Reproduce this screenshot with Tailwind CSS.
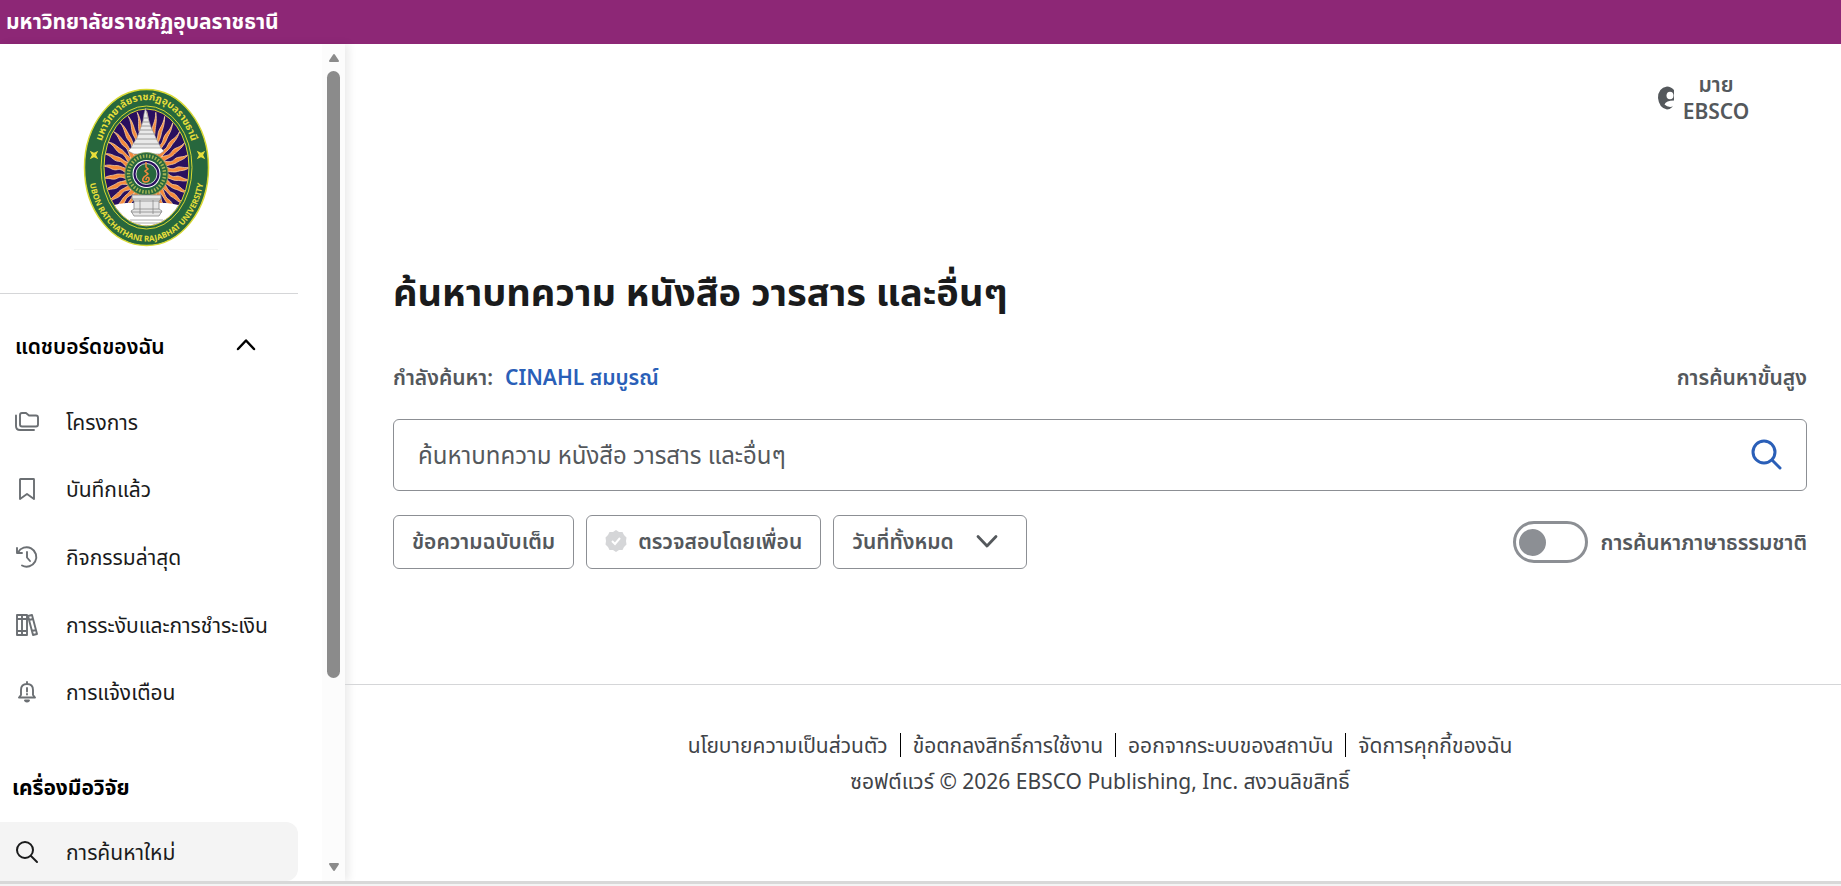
<!DOCTYPE html>
<html lang="th">
<head>
  <meta charset="UTF-8" />
  <meta name="viewport" content="width=device-width, initial-scale=1.0"/>
  <title>EBSCO</title>
  <script src="https://cdn.jsdelivr.net/npm/@tailwindcss/browser@4"></script>
</head>
<body class="min-h-screen flex flex-col bg-white text-[#1a1b1c] text-[21px] leading-7 font-['Noto_Sans','Noto_Sans_Thai',sans-serif]">
  <header class="h-11 shrink-0 flex items-center px-1.5 pb-0.5 bg-[#8d2776] text-white font-bold">มหาวิทยาลัยราชภัฏอุบลราชธานี</header>

  <div class="flex flex-1">
    <!-- Sidebar -->
    <aside class="w-[345px] shrink-0 flex shadow-[4px_0_8px_rgba(0,0,0,0.08)]">
      <div class="flex-1 pr-6">
        <div class="pt-9 pl-[70px] h-[250px] border-b border-[#d5d6d8]">
          <svg class="w-[150px] h-[180px]" viewBox="0 0 150 180" role="img" aria-label="Ubon Ratchathani Rajabhat University">
            <defs>
              <clipPath id="oval"><ellipse cx="76.5" cy="87.5" rx="42" ry="58"/></clipPath>
              <path id="flame" d="M-3 -20C-6 -29 2 -33 -1 -41C-3 -48 2 -52 0 -62C4 -53 2 -49 3 -43C4 -36 0 -32 3 -20Z"/>
              <g id="flames">
                <use href="#flame"/>
                <use href="#flame" transform="rotate(12)"/>
                <use href="#flame" transform="rotate(24)"/>
                <use href="#flame" transform="rotate(36)"/>
                <use href="#flame" transform="rotate(48)"/>
                <use href="#flame" transform="rotate(60)"/>
              </g>
              <path id="topArc" d="M30 69A48 65 0 0 1 123 69"/>
              <path id="bottomArc" d="M18.500 88A58 73.500 0 0 0 134.500 88"/>
            </defs>
            <path d="M4 169.500H148" stroke="#f5f5f5"/>
            <ellipse cx="76.500" cy="87.500" rx="62" ry="78" fill="#27673d" stroke="#d8d832" stroke-width="1.500"/>
            <ellipse cx="76.500" cy="87.500" rx="45.500" ry="61.500" fill="none" stroke="#d8d832" stroke-width="1"/>
            <ellipse cx="76.500" cy="87.500" rx="42.500" ry="58.500" fill="#29105f" stroke="#d8d832" stroke-width="1"/>
            <g clip-path="url(#oval)">
              <g transform="translate(76.500 93) scale(.72 1)" fill="#f58a3c" stroke="#fbd9a8" stroke-width=".8">
                <use href="#flames"/>
                <use href="#flames" transform="rotate(72)"/>
                <use href="#flames" transform="rotate(144)"/>
                <use href="#flames" transform="rotate(216)"/>
                <use href="#flames" transform="rotate(288)"/>
              </g>
              <path d="M30 150V132Q40 124 56 123H96Q112 124 124 132V150Z" fill="#fff"/>
              <path d="M60 140H93M57 143H96M59 146H94" stroke="#999" stroke-width=".8"/>
            </g>
            <path d="M75.500 28L77 34L79 41L81 47L86 58L90 66L92 71V70Q77 75 60 70L63 64L67 58L71 47L73 41L74 34Z" fill="#e9e9e9" stroke="#999" stroke-width=".6"/>
            <path d="M73.500 38H78M72.500 42H79M71 46H81M70 50H83M68 54H85M66 59H87M64 64H89" stroke="#888" stroke-width=".8"/>
            <path d="M61 68L58 71L64 74L90 74L94 71L91 68Z" fill="#fff" stroke="#888" stroke-width=".6"/>
            <circle cx="76.500" cy="94" r="21.500" fill="#27673d" stroke="#7a9b50" stroke-width=".8"/>
            <circle cx="76.500" cy="94" r="18" fill="none" stroke="#a4b553" stroke-width="3.500" stroke-dasharray="1.500 1.600"/>
            <circle cx="76.500" cy="94" r="14" fill="#fff"/>
            <circle cx="76.500" cy="94" r="13" fill="#29105f"/>
            <circle cx="76.500" cy="94" r="10.500" fill="#27673d" stroke="#fff" stroke-width=".8"/>
            <path d="M76 82V87L78 89L75 91L78 94L74 97Q71 101 75 102Q80 102 79 98Q76 96 76 100" fill="none" stroke="#f58a3c" stroke-width="1.500"/>
            <path d="M62 115H91V119L89 121V129L92 131L89 136H64L61 131L64 129V121L62 119Z" fill="#e6e6e6" stroke="#888" stroke-width=".8"/>
            <path d="M62 119H91M64 121H89M64 129H89M70 120V134M83 120V134M61 132H92" stroke="#888" stroke-width=".8"/>
            <path d="M22 73L24 74L26 73L25 75L26 77L24 76L22 77L23 75ZM129 73L131 74L133 73L132 75L133 77L131 76L129 77L130 75Z" fill="#27673d" stroke="#e8df3a" stroke-width="2"/>
            <text class="text-[10px] font-bold" fill="#e8df3a" text-anchor="middle"><textPath href="#topArc" startOffset="50%">มหาวิทยาลัยราชภัฏอุบลราชธานี</textPath></text>
            <text class="text-[8px] font-bold" fill="#e8df3a" text-anchor="middle"><textPath href="#bottomArc" startOffset="50%">UBON RATCHATHANI RAJABHAT UNIVERSITY</textPath></text>
          </svg>
        </div>

        <button class="w-full h-[84px] mt-2.5 pl-[15px] pr-[42px] flex items-center justify-between font-semibold text-black">
          แดชบอร์ดของฉัน
          <svg class="w-5 h-5" viewBox="0 0 20 20" fill="none" stroke="currentColor" stroke-width="2.500" stroke-linecap="round" stroke-linejoin="round"><path d="M2 13L10 4.500L18 13"/></svg>
        </button>

        <nav class="h-[338px] flex flex-col">
          <a href="#" class="flex-1 flex items-center gap-[27px] pl-[15px]">
            <svg class="w-6 h-6 text-[#6b6f73]" viewBox="0 0 24 24" fill="none" stroke="currentColor" stroke-width="1.900" stroke-linecap="round" stroke-linejoin="round"><path d="M5 14.500V5Q5 3 7 3H11L14 5.500H21Q23 5.500 23 7.500V14.500Q23 16.500 21 16.500H7Q5 16.500 5 14.500ZM1 5.500V16Q1 20 5 20H19"/></svg>
            โครงการ
          </a>
          <a href="#" class="flex-1 flex items-center gap-[27px] pl-[15px]">
            <svg class="w-6 h-6 text-[#6b6f73]" viewBox="0 0 24 24" fill="none" stroke="currentColor" stroke-width="1.900" stroke-linejoin="round"><path d="M5 2.500Q5 2 5.500 2H18.500Q19 2 19 2.500V22L12 17L5 22Z"/></svg>
            บันทึกแล้ว
          </a>
          <a href="#" class="flex-1 flex items-center gap-[27px] pl-[15px]">
            <svg class="w-6 h-6 text-[#6b6f73]" viewBox="0 0 24 24" fill="none" stroke="currentColor" stroke-width="1.900" stroke-linecap="round" stroke-linejoin="round"><path d="M3 7.500A9.700 9.700 0 1 1 7 20.500M2 3V8H7M12 7V12.500L15 16"/></svg>
            กิจกรรมล่าสุด
          </a>
          <a href="#" class="flex-1 flex items-center gap-[27px] pl-[15px]">
            <svg class="w-6 h-6 text-[#6b6f73]" viewBox="0 0 24 24" fill="none" stroke="currentColor" stroke-width="1.900" stroke-linejoin="round"><path d="M2 2H7V22H2ZM7 2H12V22H7ZM2 6H12M2 18H12M13 3L17 2L22 21L18 22ZM14 7L18 6M17 18L21 17"/></svg>
            การระงับและการชำระเงิน
          </a>
          <a href="#" class="flex-1 flex items-center gap-[27px] pl-[15px]">
            <svg class="w-6 h-6 text-[#6b6f73]" viewBox="0 0 24 24" fill="none" stroke="currentColor" stroke-width="1.900" stroke-linecap="round" stroke-linejoin="round"><path d="M4 17.500H20L18 15V10Q18 4 12 4Q6 4 6 10V15ZM12 2V4M12 8V11.500M12 14V14.500"/><path d="M10 20.500H14Q12 22.500 10 20.500Z" fill="currentColor"/></svg>
            การแจ้งเตือน
          </a>
        </nav>

        <h2 class="h-[70px] mt-[26px] pl-3 flex items-center font-bold text-black">เครื่องมือวิจัย</h2>
        <a href="#" class="h-[59px] flex items-center gap-[27px] pl-[15px] rounded-r-xl bg-[#f4f4f4]">
          <svg class="w-6 h-6" viewBox="0 0 24 24" fill="none" stroke="currentColor" stroke-width="2" stroke-linecap="round"><circle cx="10" cy="10" r="8"/><path d="M16 16L22 22"/></svg>
          การค้นหาใหม่
        </a>
      </div>

      <!-- Scroll track -->
      <div class="w-[23px] flex flex-col items-center py-2 bg-[#fcfcfc]" aria-hidden="true">
        <svg class="w-3 h-3" viewBox="0 0 12 12" fill="#8b8b8b" stroke="#8b8b8b" stroke-width="2" stroke-linejoin="round"><path d="M6 3L10 9H2Z"/></svg>
        <div class="w-[13px] h-[607px] mt-[7px] rounded-full bg-[#8b8b8b]"></div>
        <svg class="w-3 h-3 mt-auto" viewBox="0 0 12 12" fill="#8b8b8b" stroke="#8b8b8b" stroke-width="2" stroke-linejoin="round"><path d="M6 9L10 3H2Z"/></svg>
      </div>
    </aside>

    <div class="flex-1">
      <main class="pl-12 pr-[34px] pt-[27px] h-[641px] border-b border-[#d5d6d8] text-[#54585c] font-semibold">
        <button class="w-[92px] ml-auto mr-[57px] flex items-center gap-2">
          <svg class="w-4 h-6 shrink-0" viewBox="0 0 16 24"><path d="M16 4Q13 0.500 9 0.500Q0 2 0 12Q1 22 9 23.500Q12 23.500 15 20.500Q10 22 6.500 18.500Q8 14.500 16 14.500Z" fill="#54585c"/><ellipse cx="12" cy="9.500" rx="3.500" ry="3.800" fill="#fff"/></svg>
          <span class="flex-1 leading-[27px] text-center">มาย EBSCO</span>
        </button>

        <h1 class="mt-[139px] h-[54px] flex items-center text-[38px] font-bold text-[#1a1b1c]">ค้นหาบทความ หนังสือ วารสาร และอื่นๆ</h1>

        <div class="mt-[43px] h-[32px] mb-[26px] flex items-center">
          <span>กำลังค้นหา:</span>
          <a href="#" class="ml-3 text-[#2a5fb8]">CINAHL สมบูรณ์</a>
          <a href="#" class="ml-auto">การค้นหาขั้นสูง</a>
        </div>

        <form class="h-[72px] flex items-center px-6 border border-[#8c8f94] rounded-md">
          <input type="search" aria-label="ค้นหา" placeholder="ค้นหาบทความ หนังสือ วารสาร และอื่นๆ" class="flex-1 h-full pb-0.5 outline-none text-2xl font-normal placeholder:text-[#54585c]"/>
          <button type="button" aria-label="ค้นหา">
            <svg class="w-8 h-8" viewBox="0 0 32 32" fill="none" stroke="#2a5fb8" stroke-width="3" stroke-linecap="round"><circle cx="14" cy="13" r="11"/><path d="M22 21L30 29"/></svg>
          </button>
        </form>

        <div class="mt-6 flex items-center gap-3">
          <button class="h-[54px] px-[18px] pb-0.5 border border-[#8c8f94] rounded-md">ข้อความฉบับเต็ม</button>
          <button class="h-[54px] px-[18px] pb-0.5 border border-[#8c8f94] rounded-md flex items-center gap-[11px]">
            <svg class="w-[22px] h-[22px]" viewBox="0 0 22 22"><path d="M11 0L14 2L17.500 2L19 5L21.500 7.500L21 11L21.500 14.500L19 17L17.500 20L14 20L11 22L8 20L4.500 20L3 17L.5 14.500L1 11L.5 7.500L3 5L4.500 2L8 2Z" fill="#d5d6d8"/><path d="M7 11L10 14L15 8" fill="none" stroke="#fff" stroke-width="2"/></svg>
            ตรวจสอบโดยเพื่อน
          </button>
          <button class="h-[54px] pl-[18px] pr-[28px] pb-0.5 border border-[#8c8f94] rounded-md flex items-center gap-[22px]">
            วันที่ทั้งหมด
            <svg class="w-[22px] h-5" viewBox="0 0 22 20" fill="none" stroke="currentColor" stroke-width="2.800" stroke-linecap="round" stroke-linejoin="round"><path d="M2 5.500L11 15L20 5.500"/></svg>
          </button>
          <label class="ml-auto flex items-center gap-3">
            <input type="checkbox" role="switch" class="peer sr-only"/>
            <span class="w-[75px] h-[42px] flex items-center px-[3px] border-3 border-[#8c8f94] rounded-full peer-checked:justify-end">
              <span class="w-[27px] h-[27px] rounded-full bg-[#8c8f94]"></span>
            </span>
            การค้นหาภาษาธรรมชาติ
          </label>
        </div>
      </main>

      <footer class="pt-[42px] pl-12 pr-[34px] text-center text-[#3f4347]">
        <div class="h-9 flex items-center justify-center">
          <a href="#" class="pr-3">นโยบายความเป็นส่วนตัว</a>
          <a href="#" class="px-3 border-l border-black leading-6">ข้อตกลงสิทธิ์การใช้งาน</a>
          <a href="#" class="px-3 border-l border-black leading-6">ออกจากระบบของสถาบัน</a>
          <a href="#" class="pl-3 border-l border-black leading-6">จัดการคุกกี้ของฉัน</a>
        </div>
        <p class="leading-9">ซอฟต์แวร์ © 2026 EBSCO Publishing, Inc. สงวนลิขสิทธิ์</p>
      </footer>
    </div>
  </div>
  <div class="h-[5px] shrink-0 bg-[#d8d8d8] border-b-2 border-[#f4f4f4]"></div>
</body>
</html>
